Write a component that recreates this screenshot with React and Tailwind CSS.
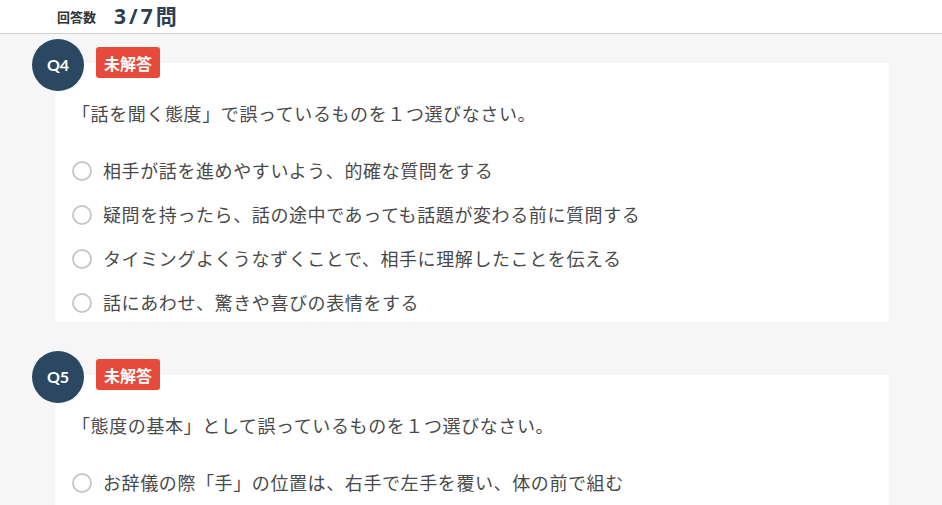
import React from 'react';

const questions = [
  {
    no: 'Q4',
    text: '「話を聞く態度」で誤っているものを１つ選びなさい。',
    options: [
      '相手が話を進めやすいよう、的確な質問をする',
      '疑問を持ったら、話の途中であっても話題が変わる前に質問する',
      'タイミングよくうなずくことで、相手に理解したことを伝える',
      '話にあわせ、驚きや喜びの表情をする',
    ],
  },
  {
    no: 'Q5',
    text: '「態度の基本」として誤っているものを１つ選びなさい。',
    options: ['お辞儀の際「手」の位置は、右手で左手を覆い、体の前で組む'],
  },
];

const QuestionCard = ({ q }) => (
  <div className="relative bg-white ml-[55px] w-[834px] pt-[38px] pl-[23px] last:pb-[4px]">
    <div className="absolute left-[-23px] top-[-24px] w-[52px] h-[52px] rounded-full bg-[#2b4862] flex items-center justify-center text-white text-[16px] font-bold font-['Lato','Noto_Sans',sans-serif]">
      {q.no}
    </div>
    <div className="absolute left-[41px] top-[-16px] h-[31px] px-[8px] rounded-[3px] bg-[#e64a3b] flex items-center text-white text-[16px] font-bold font-['Noto_Sans_CJK_JP',sans-serif]">
      未解答
    </div>
    <p className="text-[18px] leading-[27px] tracking-[0.6px] text-[#4a4a4a] font-['Noto_Sans_CJK_JP',sans-serif] -ml-[6px] -mt-[1px]">
      {q.text}
    </p>
    <ul className="mt-[25px] flex flex-col gap-[6px]">
      {q.options.map((o) => (
        <li key={o} className="h-[38px] flex items-center">
          <span className="w-[20px] h-[20px] rounded-full border-2 border-[#c8c8c8] bg-white shrink-0 -ml-[6px]" />
          <span className="ml-[11px] text-[18px] tracking-[0.6px] text-[#4a4a4a] font-['Noto_Sans_CJK_JP',sans-serif] whitespace-nowrap -mt-[2px]">
            {o}
          </span>
        </li>
      ))}
    </ul>
  </div>
);

export default function App() {
  return (
    <div className="w-[942px] h-[505px] overflow-hidden bg-[#f6f6f6]">
      <header className="h-[34px] bg-white border-b border-[#cfcfcf] flex items-center pl-[57px]">
        <span className="text-[13px] font-bold text-[#333] font-['Noto_Sans_CJK_JP',sans-serif]">回答数</span>
        <span className="ml-[18px] text-[21px] tracking-[3px] font-bold text-[#2c3e50] font-['Open_Sans','Noto_Sans_CJK_JP',sans-serif]">
          3/7問
        </span>
      </header>
      <div className="pt-[29px] flex flex-col gap-[53px]">
        {questions.map((q) => (
          <QuestionCard key={q.no} q={q} />
        ))}
      </div>
    </div>
  );
}
